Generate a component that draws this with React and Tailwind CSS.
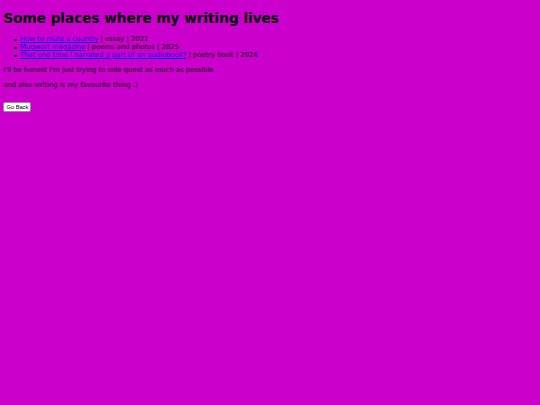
const items = [
  { title: 'How to mute a country', rest: 'essay | 2021' },
  { title: 'Mugwort magazine', rest: 'poems and photos | 2025' },
  { title: 'That one time I narrated a part of an audiobook?', rest: 'poetry book | 2024' },
]

export default function App() {
  return (
    <div className="min-h-screen bg-[#cc00cc] px-[3.4px] pt-[2px] pb-[3.4px] text-black font-['DejaVu_Sans',sans-serif]">
      <h1 className="text-[13.6px] font-bold leading-[15.8px] my-[9.1px]">Some places where my writing lives</h1>

      <ul className="pl-[11px] my-[6.8px] text-[6.8px] leading-[7.9px]">
        {items.map((it) => (
          <li key={it.title} className="flex items-center gap-[3.5px]">
            <span className="w-[2.2px] h-[2.2px] rounded-full bg-black shrink-0" />
            <span className="whitespace-pre">
              <a href="#" className="text-[#0000ee] underline">{it.title}</a> | {it.rest}
            </span>
          </li>
        ))}
      </ul>

      <p className="text-[6.8px] leading-[7.9px] my-[6.8px]">I'll be honest I'm just trying to side quest as much as possible</p>
      <p className="text-[6.8px] leading-[8.5px] mt-[6.8px] mb-[12.5px]">and also writing is my favourite thing :)</p>

      <button className="block h-[10px] w-[28px] bg-white border border-[#8f8f9d] rounded-[2px] text-[5.7px] leading-[7px] font-['Liberation_Sans',sans-serif]">
        Go Back
      </button>
    </div>
  )
}
